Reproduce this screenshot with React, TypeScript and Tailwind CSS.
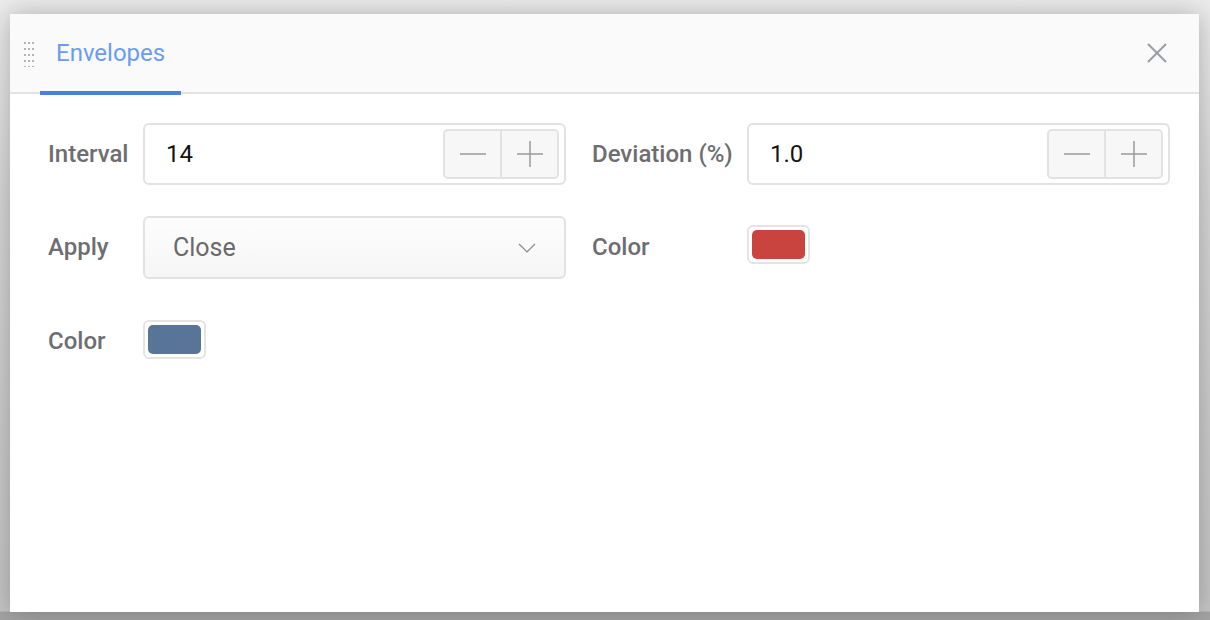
import React from "react";

function Stepper() {
  return (
    <div className="flex h-[50px] w-[116px] overflow-hidden rounded-[5px] border-2 border-[#e2e2e2] bg-[#f7f7f7]">
      <div className="flex flex-1 items-center justify-center border-r-2 border-[#e2e2e2]">
        <svg width="26" height="26" viewBox="0 0 26 26">
          <line x1="0" y1="13" x2="26" y2="13" stroke="#9a9a9a" strokeWidth="1.5" />
        </svg>
      </div>
      <div className="flex flex-1 items-center justify-center">
        <svg width="26" height="26" viewBox="0 0 26 26">
          <line x1="0" y1="13" x2="26" y2="13" stroke="#9a9a9a" strokeWidth="1.5" />
          <line x1="13" y1="0" x2="13" y2="26" stroke="#9a9a9a" strokeWidth="1.5" />
        </svg>
      </div>
    </div>
  );
}

function NumberInput({ value }: { value: string }) {
  return (
    <div className="flex h-[62px] items-center justify-between rounded-[6px] border-2 border-[#e2e2e2] bg-white pl-[21px] pr-[5px]">
      <span className="text-[24px] text-[#141414]">{value}</span>
      <Stepper />
    </div>
  );
}

function Swatch({ color }: { color: string }) {
  return (
    <div className="flex h-[39px] w-[63px] items-center justify-center rounded-[6px] border-2 border-[#e4e4e4] bg-white p-[3px]">
      <div className="h-full w-full rounded-[5px]" style={{ backgroundColor: color }} />
    </div>
  );
}

function Label({ children, className = "" }: { children: React.ReactNode; className?: string }) {
  return (
    <div className={"text-[24px] font-medium text-[#6d6d72] " + className}>{children}</div>
  );
}

export default function App() {
  return (
    <div
      className="relative h-[620px] w-full overflow-hidden bg-[linear-gradient(to_bottom,#ececec_0px,#d6d6d6_200px,#cbcbcb_420px,#c4c4c4_611px,#a3a3a3_612px,#a3a3a3_620px)] pl-[10px] pt-[14px]"
      style={{ fontFamily: "Roboto, 'Noto Sans', Arial, sans-serif" }}
    >
      <div className="flex h-[598px] w-[1189px] flex-col bg-white shadow-[0_0_24px_rgba(0,0,0,0.25)]">
        {/* Header */}
        <div className="relative flex h-[80px] items-center border-b-2 border-[#e3e3e3] bg-[#fafafa]">
          <svg className="ml-[14px]" width="12" height="28" viewBox="0 0 12 28">
            {[0, 1, 2, 3, 4].map((r) =>
              [0, 1, 2].map((c) => (
                <rect key={r + "-" + c} x={c * 4 + 0} y={r * 6 + 3} width="2" height="2" fill="#b3b3b3" />
              ))
            )}
          </svg>
          <div className="relative ml-[20px] flex h-full items-center">
            <span className="text-[24px] text-[#6a9cf2]">Envelopes</span>
            <div className="absolute bottom-[-3px] left-[-16px] right-[-16px] h-[4px] bg-[#4a7fe2]" />
          </div>
          <div className="ml-auto mr-[31px] flex h-[22px] w-[22px] items-center justify-center">
            <svg width="20" height="20" viewBox="0 0 20 20">
              <line x1="1" y1="1" x2="19" y2="19" stroke="#9ba0a6" strokeWidth="2.2" />
              <line x1="19" y1="1" x2="1" y2="19" stroke="#9ba0a6" strokeWidth="2.2" />
            </svg>
          </div>
        </div>

        {/* Body */}
        <div className="grid grid-cols-[95px_423px_181px_423px] items-center gap-y-[31px] pl-[38px] pt-[29px]">
          <Label>Interval</Label>
          <NumberInput value="14" />
          <Label className="pl-[26px]">Deviation (%)</Label>
          <NumberInput value="1.0" />

          <Label className="-mt-[2px]">Apply</Label>
          <div className="flex h-[63px] items-center justify-between rounded-[6px] border-2 border-[#e2e2e2] bg-[linear-gradient(to_bottom,#fdfdfd,#f6f6f6)] pl-[28px] pr-[28px]">
            <span className="text-[25px] text-[#6a6a6a]">Close</span>
            <svg width="18" height="10" viewBox="0 0 18 10">
              <polyline points="1,1 9,9 17,1" fill="none" stroke="#8a8a8a" strokeWidth="1.2" />
            </svg>
          </div>
          <Label className="-mt-[2px] pl-[26px]">Color</Label>
          <div className="-mt-[6px]">
            <Swatch color="#c9443f" />
          </div>

          <div className="flex h-[62px] items-center">
            <Label>Color</Label>
          </div>
          <div className="-mt-[4px]">
            <Swatch color="#587497" />
          </div>
        </div>
      </div>
    </div>
  );
}
